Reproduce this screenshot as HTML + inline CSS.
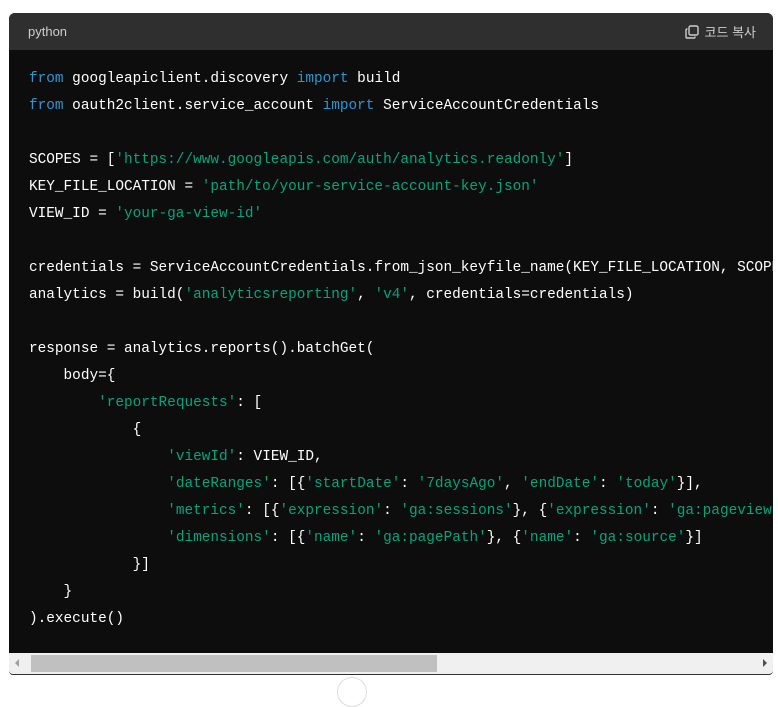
<!DOCTYPE html>
<html><head><meta charset="utf-8"><style>
body{margin:0;background:#fff;width:778px;height:685px;overflow:hidden;position:relative;font-family:"Liberation Sans","Noto Sans CJK KR",sans-serif}
.box{position:absolute;left:9px;top:13px;width:764px;height:661px;background:#0d0d0d;border-radius:6px 6px 4px 4px;overflow:hidden;border-bottom:1px solid #333}
.hd{height:37px;background:#2f2f2f;color:#cdcdcd;font-size:13px;display:flex;align-items:center;justify-content:space-between;padding:0 17px 0 19px}
.hd .cp{display:flex;align-items:center;gap:5px;font-size:13px}
pre{margin:0;padding:16px 0 0 20px;font-family:"Liberation Mono",monospace;font-size:14.4px;line-height:27px;color:#fff;white-space:pre}
.k{color:#2e95d3}.s{color:#00a67d}
.sb{position:absolute;left:0;top:640px;width:764px;height:21px;background:#f0f0f0}
.th{position:absolute;left:22px;top:2px;width:406px;height:17px;background:#c0c0c0}
.al{position:absolute;left:6px;top:6px;width:0;height:0;border-top:4px solid transparent;border-bottom:4px solid transparent;border-right:4px solid #a0a0a0}
.ar{position:absolute;right:6px;top:6px;width:0;height:0;border-top:4px solid transparent;border-bottom:4px solid transparent;border-left:4px solid #505050}
.circ{position:absolute;left:337px;top:677px;width:28px;height:28px;border-radius:50%;border:1px solid #ddd;background:#fff}
</style></head><body>
<div class="box">
<div class="hd"><span>python</span><span class="cp"><svg width="16" height="16" viewBox="0 0 16 16" fill="none" stroke="#cdcdcd" stroke-width="1.4"><rect x="5" y="2" width="9" height="9" rx="1.5"/><path d="M3.5 5H3a1 1 0 0 0-1 1v7a1 1 0 0 0 1 1h7a1 1 0 0 0 1-1v-.5"/></svg>코드 복사</span></div>
<pre><span class="k">from</span> googleapiclient.discovery <span class="k">import</span> build
<span class="k">from</span> oauth2client.service_account <span class="k">import</span> ServiceAccountCredentials

SCOPES = [<span class="s">'https://www.googleapis.com/auth/analytics.readonly'</span>]
KEY_FILE_LOCATION = <span class="s">'path/to/your-service-account-key.json'</span>
VIEW_ID = <span class="s">'your-ga-view-id'</span>

credentials = ServiceAccountCredentials.from_json_keyfile_name(KEY_FILE_LOCATION, SCOPES)
analytics = build(<span class="s">'analyticsreporting'</span>, <span class="s">'v4'</span>, credentials=credentials)

response = analytics.reports().batchGet(
    body={
        <span class="s">'reportRequests'</span>: [
            {
                <span class="s">'viewId'</span>: VIEW_ID,
                <span class="s">'dateRanges'</span>: [{<span class="s">'startDate'</span>: <span class="s">'7daysAgo'</span>, <span class="s">'endDate'</span>: <span class="s">'today'</span>}],
                <span class="s">'metrics'</span>: [{<span class="s">'expression'</span>: <span class="s">'ga:sessions'</span>}, {<span class="s">'expression'</span>: <span class="s">'ga:pageviews'</span>}],
                <span class="s">'dimensions'</span>: [{<span class="s">'name'</span>: <span class="s">'ga:pagePath'</span>}, {<span class="s">'name'</span>: <span class="s">'ga:source'</span>}]
            }]
    }
).execute()</pre>
<div class="sb"><div class="al"></div><div class="th"></div><div class="ar"></div></div>
</div>
<div class="circ"></div>
</body></html>
